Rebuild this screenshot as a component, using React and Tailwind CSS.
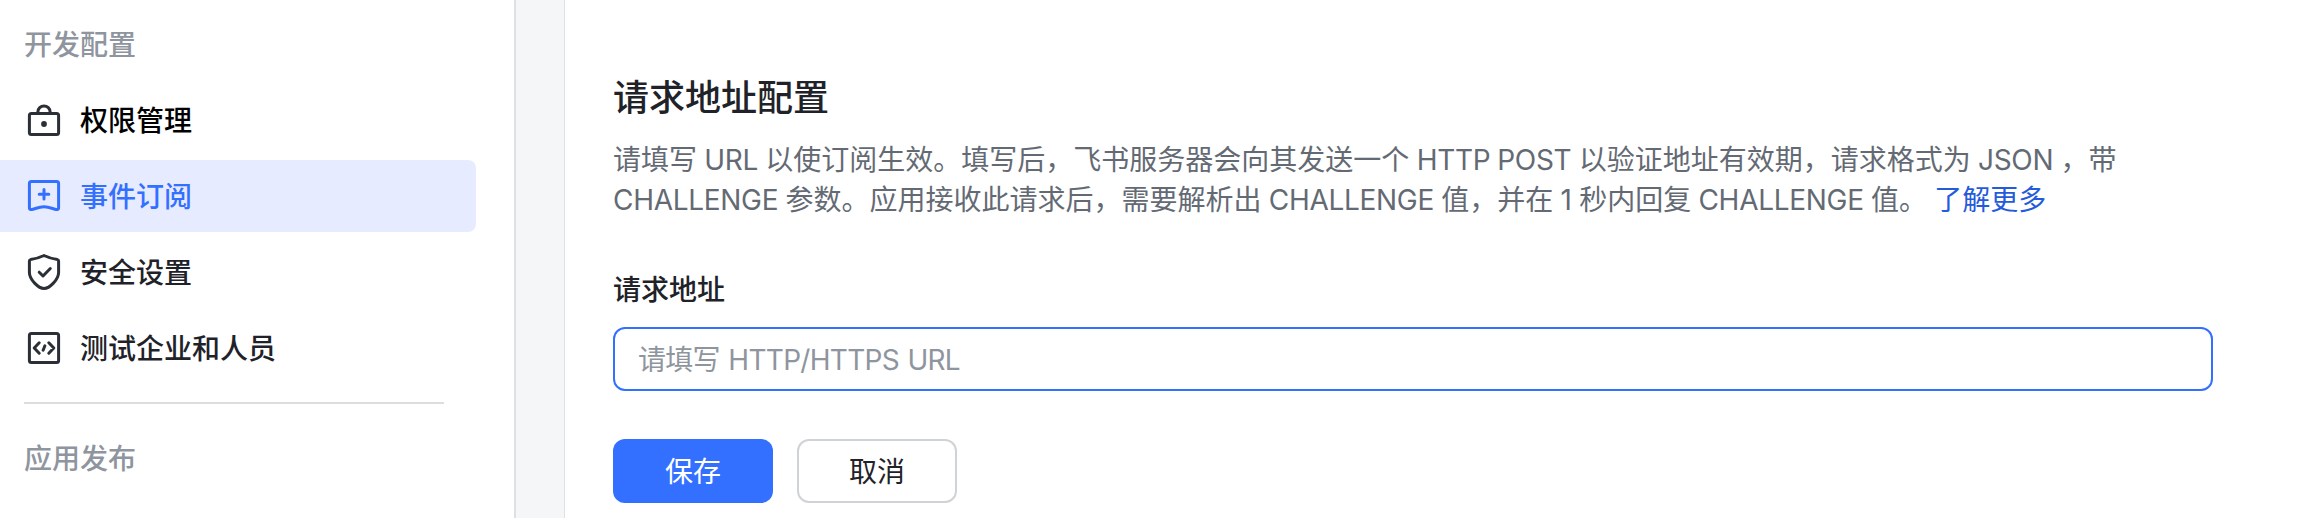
const NAV = [
  { label: '权限管理', icon: LockIcon, tone: 'text-black' },
  { label: '事件订阅', icon: SubscribeIcon, active: true },
  { label: '安全设置', icon: ShieldIcon, tone: 'text-[#1f2329]' },
  { label: '测试企业和人员', icon: CodeIcon, tone: 'text-[#1f2329]' },
];

function Icon({ children }) {
  return (
    <svg
      className="size-10 shrink-0"
      viewBox="0 0 40 40"
      fill="none"
      stroke="currentColor"
      strokeWidth="3"
      strokeLinecap="round"
      strokeLinejoin="round"
    >
      {children}
    </svg>
  );
}

function LockIcon() {
  return (
    <Icon>
      <rect x="5.4" y="13.5" width="29.2" height="21" rx="2" />
      <path d="M13.9 13.2v-1.4a6.1 5.9 0 0 1 12.2 0v1.4" />
      <circle cx="20" cy="24" r="2.9" fill="currentColor" stroke="none" />
    </Icon>
  );
}

function SubscribeIcon() {
  return (
    <Icon>
      <path d="M7.4 5.5h25.2a2 2 0 0 1 2 2v24.4c0 1.3-1 1.9-2.2 1.6-4-.9-7.4-2.7-12.4-2.7s-8.4 1.8-12.4 2.7c-1.2.3-2.2-.3-2.2-1.6V7.5a2 2 0 0 1 2-2Z" />
      <path d="M20 13.5v9.6M15.2 18.3h9.6" />
    </Icon>
  );
}

function ShieldIcon() {
  return (
    <Icon>
      <path d="M20 3.500c4.500 2.200 8.600 3.300 13.400 4.100.8.200 1.200.7 1.200 1.500v11.400C34.600 27.500 25.500 36.500 20 36.500S5.400 27.500 5.400 20.500V9.100c0-.8.400-1.300 1.200-1.500C11.400 6.800 15.500 5.700 20 3.500Z" />
      <path d="m15.200 20.200 3.800 3.800 7.300-7.500" />
    </Icon>
  );
}

function CodeIcon() {
  return (
    <Icon>
      <rect x="5.4" y="5.5" width="29.2" height="29" rx="2" />
      <path d="m15.200 14.800-5 5.200 5 5.200M24.800 14.800l5 5.200-5 5.200M20.900 17.800l-1.800 4.400" />
    </Icon>
  );
}

function SectionTitle({ children }) {
  return <h2 className="pl-6 text-[28px] leading-10 font-medium text-[#8f959e]">{children}</h2>;
}

function Sidebar() {
  return (
    <aside className="h-full w-[516px] shrink-0 overflow-hidden border-r-2 border-[#dee0e3] pt-[25px]">
      <SectionTitle>开发配置</SectionTitle>
      <nav className="mt-[19px] flex w-[476px] flex-col gap-1">
        {NAV.map(({ label, icon: Glyph, active, tone }) => (
          <a
            key={label}
            className={
              active
                ? 'flex h-18 items-center gap-4 rounded-r-lg bg-[#e7ebff] pl-6 text-[#3370ff]'
                : 'flex h-18 items-center gap-4 pl-6 text-[#2b2f36]'
            }
          >
            <Glyph />
            <span className={`pt-0.5 text-[28px] leading-10 font-medium ${tone ?? ''}`}>{label}</span>
          </a>
        ))}
      </nav>
      <hr className="mt-[18px] mb-[35px] ml-6 w-[420px] border-t-2 border-[#dcdddf]" />
      <SectionTitle>应用发布</SectionTitle>
    </aside>
  );
}

function Latin({ children }) {
  return <span className="tracking-[-0.3px]">{children}</span>;
}

export default function App() {
  return (
    <div className="flex h-[518px] w-full overflow-hidden bg-white font-['Inter','Noto_Sans_CJK_SC',sans-serif]">
      <Sidebar />
      <div className="w-12 shrink-0 bg-[#f5f6f7]" />
      <main className="min-w-0 flex-1 border-l border-[#dee0e3] pt-[73px] pl-12">
        <h1 className="text-[36px] leading-[50px] font-medium text-[#1f2329]">请求地址配置</h1>
        <p className="mt-[17px] w-[1540px] text-[28px] leading-10 [word-spacing:-0.6px] text-[#646a73]">
          请填写 <Latin>URL</Latin> 以使订阅生效。填写后，飞书服务器会向其发送一个 <Latin>HTTP POST</Latin>{' '}
          以验证地址有效期，请求格式为 <Latin>JSON</Latin> ，带
          <br />
          <Latin>CHALLENGE</Latin> 参数。应用接收此请求后，需要解析出 <Latin>CHALLENGE</Latin> 值，并在 1
          秒内回复 <Latin>CHALLENGE</Latin> 值。{' '}
          <a className="text-[#245bdb]">了解更多</a>
        </p>
        <label className="mt-[50px] block text-[28px] leading-10 font-medium text-[#1f2329]">请求地址</label>
        <input
          className="mt-[17px] block h-16 w-[1600px] rounded-xl border-2 border-[#3370ff] pt-0.5 pr-[22px] pl-[23px] text-[28px] tracking-[-0.7px] [word-spacing:1.2px] placeholder:text-[#8f959e]"
          placeholder="请填写 HTTP/HTTPS URL"
        />
        <div className="mt-12 flex gap-6 text-[28px]">
          <button className="h-16 w-40 rounded-xl bg-[#3370ff] pt-0.5 text-white">保存</button>
          <button className="h-16 w-40 rounded-xl border-2 border-[#d0d3d6] pt-0.5 text-[#1f2329]">取消</button>
        </div>
      </main>
    </div>
  );
}
